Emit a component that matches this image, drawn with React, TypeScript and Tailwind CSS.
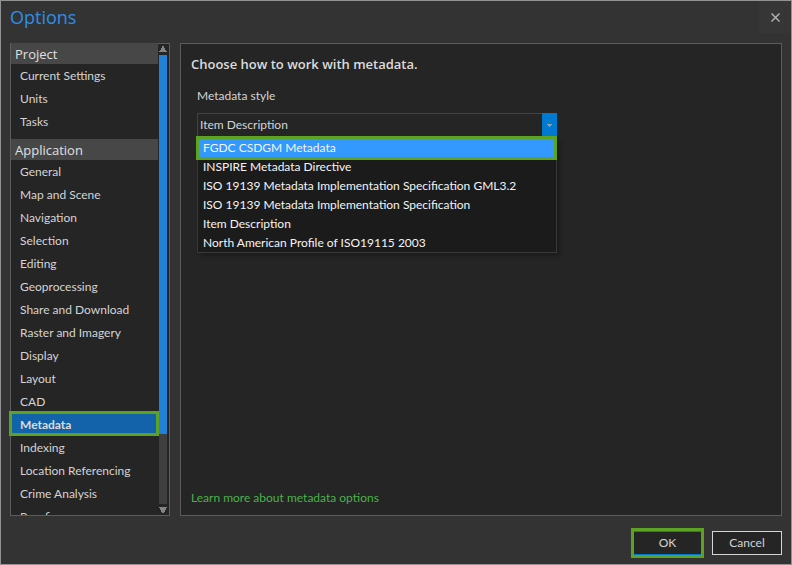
import { useState } from "react";

const projectPages = ["Current Settings", "Units", "Tasks"];

const applicationPages = [
  "General",
  "Map and Scene",
  "Navigation",
  "Selection",
  "Editing",
  "Geoprocessing",
  "Share and Download",
  "Raster and Imagery",
  "Display",
  "Layout",
  "CAD",
  "Metadata",
  "Indexing",
  "Location Referencing",
  "Crime Analysis",
  "Proofing",
];

const metadataStyles = [
  "FGDC CSDGM Metadata",
  "INSPIRE Metadata Directive",
  "ISO 19139 Metadata Implementation Specification GML3.2",
  "ISO 19139 Metadata Implementation Specification",
  "Item Description",
  "North American Profile of ISO19115 2003",
];

type PageGroupProps = {
  title: string;
  pages: string[];
  current: string;
  onSelect: (page: string) => void;
};

function PageGroup({ title, pages, current, onSelect }: PageGroupProps) {
  return (
    <section>
      <h2 className="h-[21px] bg-[#474747] pl-1 font-['Open_Sans','Noto_Sans',sans-serif] text-[13px] leading-[22px] font-medium text-[#e0e0e0]">
        {title}
      </h2>
      <ul>
        {pages.map((page) => (
          <li key={page} className="flex h-[23px]">
            {page === current ? (
              <button
                type="button"
                aria-current="page"
                className="-mt-0.5 -mr-px -ml-0.5 flex h-[25px] flex-1 items-center border-3 border-[#5da323] bg-[#1263a9] pt-0.5 pl-2 font-bold text-[#dcdcdc]"
              >
                {page}
              </button>
            ) : (
              <button
                type="button"
                onClick={() => onSelect(page)}
                className="flex h-[23px] flex-1 items-center pl-[9px] text-left whitespace-nowrap"
              >
                {page}
              </button>
            )}
          </li>
        ))}
      </ul>
    </section>
  );
}

function ScrollBar() {
  return (
    <div className="mr-0.5 flex w-2 shrink-0 flex-col items-center" aria-hidden="true">
      <svg className="h-[11px] w-2 shrink-0" viewBox="0 0 8 11" shapeRendering="crispEdges">
        <path d="M3 2h2v2h1v2h1v1h1v1H0V7h1V6h1V4h1z" fill="#858585" />
      </svg>
      <div className="w-2 flex-1 bg-[#3f3f3f]">
        <div className="h-[84.4%] bg-[#2181d8]" />
      </div>
      <svg className="h-[11px] w-2 shrink-0" viewBox="0 0 8 11" shapeRendering="crispEdges">
        <path d="M0 3h8v1H7v2H6v2H5v1H3V8H2V6H1V4H0z" fill="#858585" />
      </svg>
    </div>
  );
}

export default function App() {
  const [page, setPage] = useState("Metadata");
  const [style, setStyle] = useState("Item Description");

  return (
    <div className="flex h-screen flex-col border border-[#929292] bg-[#333333] font-['Lato','Open_Sans',sans-serif] text-[12px] leading-4 text-[#d4d4d4]">
      <header className="flex h-[42px] shrink-0 items-start justify-between pl-[9px]">
        <h1 className="pt-1 font-['Open_Sans','Noto_Sans',sans-serif] text-[18px] leading-6 text-[#2e8ee6]">
          Options
        </h1>
        <button
          type="button"
          aria-label="Close"
          className="flex h-8 w-8 items-center justify-center bg-[#363636]"
        >
          <svg className="h-[9px] w-[9px]" viewBox="0 0 9 9">
            <path d="M0.5 0.5L8.5 8.5M8.5 0.5L0.5 8.5" stroke="#b4b4b4" strokeWidth="1.4" />
          </svg>
        </button>
      </header>

      <div className="flex min-h-0 flex-1 gap-[10px] px-[9px]">
        <nav className="flex w-40 shrink-0 border border-[#5c5c5c] bg-[#252525]" aria-label="Option pages">
          <div className="-mt-px -ml-0.5 flex min-w-0 flex-1 flex-col gap-1.5 overflow-hidden pr-px pl-0.5">
            <PageGroup title="Project" pages={projectPages} current={page} onSelect={setPage} />
            <PageGroup title="Application" pages={applicationPages} current={page} onSelect={setPage} />
          </div>
          <ScrollBar />
        </nav>

        <main className="flex min-w-0 flex-1 flex-col border border-[#5c5c5c] bg-[#252525] px-[10px] pt-[10px] pb-[9px]">
          <h2 className="font-['Open_Sans','Noto_Sans',sans-serif] text-[13px] leading-5 font-semibold text-[#dcdcdc]">
            Choose how to work with metadata.
          </h2>
          <div className="mt-[14px] ml-1.5 w-[360px] max-w-full">
            <label htmlFor="metadata-style" className="block">
              Metadata style
            </label>
            <div className="relative mt-[9px]">
              <div className="flex h-6 border border-r-0 border-b-0 border-[#434343]">
                <select
                  id="metadata-style"
                  value={style}
                  onChange={(event) => setStyle(event.target.value)}
                  className="min-w-0 flex-1 appearance-none bg-[#252525] pb-0.5 pl-0.5 outline-none"
                >
                  {metadataStyles.map((name) => (
                    <option key={name}>{name}</option>
                  ))}
                </select>
                <span className="-mt-px flex w-[15px] items-center justify-center bg-[#0079d0]">
                  <svg className="h-[3px] w-[5px]" viewBox="0 0 5 3" shapeRendering="crispEdges">
                    <path d="M0 0h5v1H4v1H3v1H2V2H1V1H0z" fill="#a09c98" />
                  </svg>
                </span>
              </div>
              <ul
                role="listbox"
                aria-label="Metadata style"
                className="absolute top-6 left-0 w-full border border-[#383838] bg-[#1b1b1b] text-[#f4f4f4] shadow-[3px_3px_4px_rgba(0,0,0,0.25)]"
              >
                {metadataStyles.map((name, index) => (
                  <li
                    key={name}
                    role="option"
                    aria-selected={index === 0}
                    onClick={() => setStyle(name)}
                    className={
                      index === 0
                        ? "-mx-0.5 -mt-0.5 -mr-px -mb-[3px] flex h-6 items-center border-3 border-[#5da323] bg-[#3399ff] pl-1"
                        : "flex h-[19px] items-center pl-[5px] whitespace-nowrap"
                    }
                  >
                    {name}
                  </li>
                ))}
              </ul>
            </div>
          </div>
          <a href="#metadata-options" className="mt-auto self-start text-[#4bb04b]">
            Learn more about metadata options
          </a>
        </main>
      </div>

      <footer className="flex h-12 shrink-0 items-center justify-end gap-2 px-[9px] pt-1.5">
        <button type="button" className="flex h-[30px] w-[73px] border-3 border-[#5da323] bg-[#252525]">
          <span className="flex flex-1 items-center justify-center self-stretch border-y border-[#0079d0]">
            OK
          </span>
        </button>
        <button type="button" className="h-6 w-[70px] border border-[#d4d4d4] bg-[#252525]">
          Cancel
        </button>
      </footer>
    </div>
  );
}
